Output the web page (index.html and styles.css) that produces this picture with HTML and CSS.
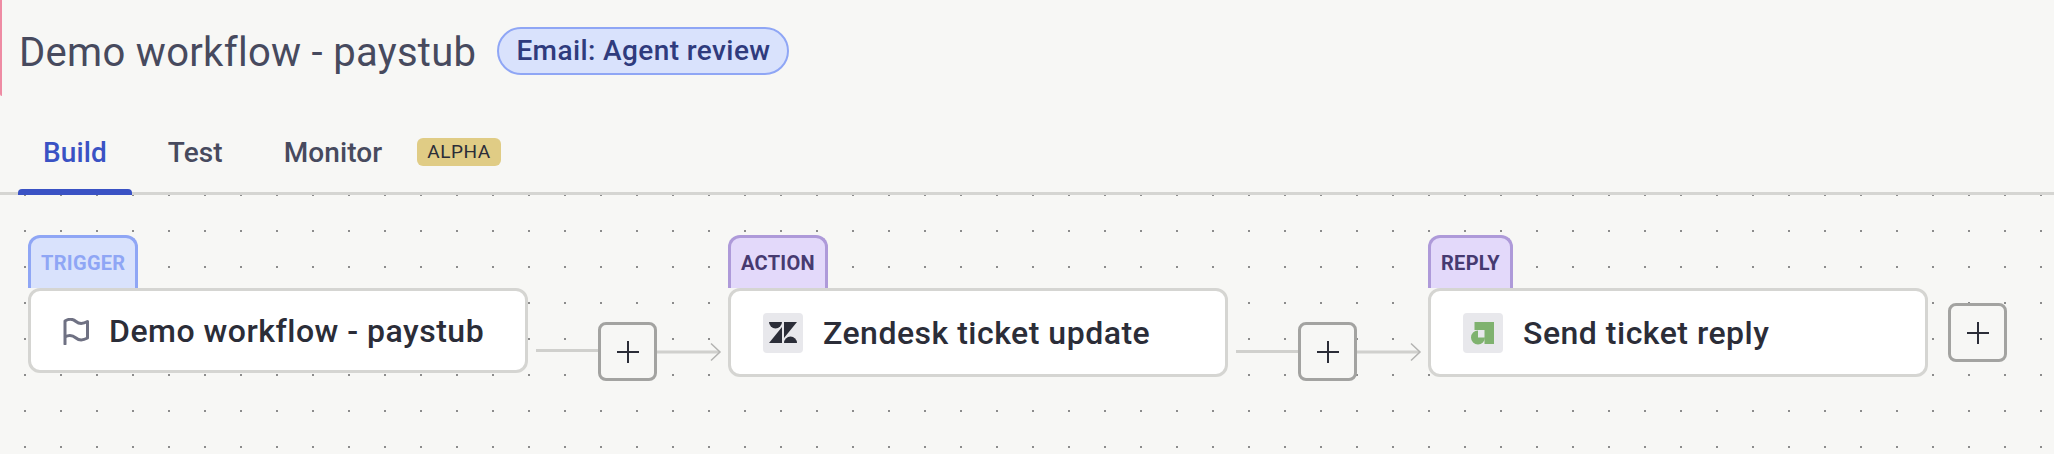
FILE: index.html
```html
<!DOCTYPE html>
<html lang="en">
<head>
    <meta charset="UTF-8">
    <meta name="viewport" content="width=device-width, initial-scale=1.0">
    <title>Demo workflow - paystub</title>
    <link rel="stylesheet" href="styles.css">
</head>
<body>
    <header class="title-row">
        <h1 class="title">Demo workflow - paystub</h1>
        <span class="status-pill">Email: Agent review</span>
    </header>

    <nav class="tabs">
        <a class="tab active">Build</a>
        <a class="tab">Test</a>
        <a class="tab">Monitor<span class="alpha-badge">ALPHA</span></a>
    </nav>

    <main class="canvas">
        <div class="node">
            <div class="node-tag trigger">TRIGGER</div>
            <div class="node-card">
                <svg class="flag-icon" viewBox="0 0 26 27" fill="none" stroke="#6f7183" stroke-width="3" stroke-linejoin="round" stroke-linecap="round">
                    <path d="M2 26V3C6 0.5 10 1 13 3.5S20 6 24.500 3.500V20C20 22.500 16 22.500 13 20S6 16.500 2 19"/>
                </svg>
                <span class="node-name">Demo workflow - paystub</span>
            </div>
        </div>

        <div class="connector">
            <div class="line raised"></div>
            <button class="add-btn">
                <svg viewBox="0 0 22 22" stroke="#2b2d38" stroke-width="2"><path d="M11 0V22M0 11H22"/></svg>
            </button>
            <svg class="arrow" viewBox="0 0 65 20" fill="none">
                <path d="M0 10H62" stroke="#d0d0cd" stroke-width="3"/>
                <path d="M54 1.500L63 10L54 18.500" stroke="#b3b3b1" stroke-width="1.500"/>
            </svg>
        </div>

        <div class="node">
            <div class="node-tag action">ACTION</div>
            <div class="node-card">
                <div class="app-tile">
                    <svg viewBox="0 0 40 40" fill="#2b2d38">
                        <g transform="translate(6 9)">
                            <path d="M13 0A6.500 6.500 0 0 1 0 0Z"/>
                            <path d="M13 5V21H0Z"/>
                            <path d="M15 16V0H28Z"/>
                            <path d="M15 21A6.500 6.500 0 0 1 28 21Z"/>
                        </g>
                    </svg>
                </div>
                <span class="node-name">Zendesk ticket update</span>
            </div>
        </div>

        <div class="connector">
            <div class="line"></div>
            <button class="add-btn">
                <svg viewBox="0 0 22 22" stroke="#2b2d38" stroke-width="2"><path d="M11 0V22M0 11H22"/></svg>
            </button>
            <svg class="arrow" viewBox="0 0 65 20" fill="none">
                <path d="M0 10H62" stroke="#d0d0cd" stroke-width="3"/>
                <path d="M54 1.500L63 10L54 18.500" stroke="#b3b3b1" stroke-width="1.500"/>
            </svg>
        </div>

        <div class="node">
            <div class="node-tag action">REPLY</div>
            <div class="node-card">
                <div class="app-tile">
                    <svg viewBox="0 0 40 40" fill="#7fb26f">
                        <path d="M11.500 9H31V31H21.500V17H11.500Z"/>
                        <path d="M15 24.500V17.500A7 7 0 1 0 22 24.500Z"/>
                    </svg>
                </div>
                <span class="node-name">Send ticket reply</span>
            </div>
        </div>

        <button class="add-btn end">
            <svg viewBox="0 0 22 22" stroke="#2b2d38" stroke-width="2"><path d="M11 0V22M0 11H22"/></svg>
        </button>
    </main>
</body>
</html>
```

FILE: styles.css
```css
* {
    margin: 0;
    padding: 0;
    box-sizing: border-box;
}

html, body {
    height: 100%;
}

body {
    background: #f7f7f5;
    color: #2b2d38;
    font-family: 'Roboto', 'Noto Sans', sans-serif;
    overflow: hidden;
    display: flex;
    flex-direction: column;
}

/* title */
.title-row {
    height: 96px;
    padding: 6px 0 0 17px;
    border-left: 2px solid #ee8ba3;
    border-bottom-left-radius: 2px;
    display: flex;
    align-items: center;
    gap: 21px;
}

.title {
    font-size: 40px;
    font-weight: 400;
    letter-spacing: 0.3px;
    color: #474a5e;
    line-height: 48px;
    padding-top: 3px;
}

.status-pill {
    height: 48px;
    padding: 0 17px;
    border: 2px solid #8fa6f5;
    border-radius: 24px;
    background: #d9e2fc;
    color: #2f3b7d;
    font-size: 28px;
    font-weight: 500;
    letter-spacing: 0.4px;
    line-height: 44px;
}

/* tabs */
.tabs {
    height: 99px;
    padding: 0 0 0 18px;
    border-bottom: 3px solid #d5d5d2;
    display: flex;
    gap: 11px;
}

.tab {
    position: relative;
    padding: 16px 25px 0;
    height: 96px;
    display: flex;
    align-items: center;
    font-size: 28px;
    font-weight: 500;
    letter-spacing: 0.1px;
    color: #474a5e;
}

.tab.active {
    color: #3a52c4;
}

.tab.active::after {
    content: '';
    position: absolute;
    left: 0;
    right: 0;
    bottom: -3px;
    height: 6px;
    background: #3a52c4;
    border-radius: 4px 4px 0 0;
}

.alpha-badge {
    margin-left: 35px;
    height: 28px;
    padding: 0 10px;
    border-radius: 6px;
    background: #e0cc85;
    color: #2b2d38;
    font-size: 19px;
    font-weight: 400;
    letter-spacing: 0.5px;
    line-height: 28px;
}

/* workflow canvas */
.canvas {
    flex: 1;
    padding: 40px 0 0 28px;
    display: flex;
    align-items: flex-start;
    background-image: radial-gradient(circle, #8c8c8c 1px, transparent 1.3px);
    background-size: 36px 36px;
    background-position: 7px -18px;
}

.node {
    width: 500px;
    flex-shrink: 0;
}

.node-tag {
    display: inline-block;
    height: 53px;
    padding: 7px 10px 0;
    border: 3px solid;
    border-bottom: 0;
    border-radius: 12px 12px 0 0;
    font-size: 20px;
    font-weight: 700;
    letter-spacing: 0.3px;
    line-height: 36px;
    vertical-align: bottom;
}

.node-tag.trigger {
    background: #d9e2fc;
    border-color: #8fa6f5;
    color: #8fa6f5;
}

.node-tag.action {
    background: #e3d9fa;
    border-color: #ae9ad9;
    color: #463a70;
}

.node-card {
    padding: 22px 32px 21px;
    background: #fff;
    border: 3px solid #d5d5d2;
    border-radius: 12px;
    display: flex;
    align-items: center;
    gap: 20px;
}

.flag-icon {
    width: 26px;
    height: 27px;
    margin-top: 1px;
    flex-shrink: 0;
}

.app-tile {
    width: 40px;
    height: 40px;
    background: #e8e8ec;
    border-radius: 4px;
}

.app-tile svg {
    display: block;
}

.node-name {
    font-size: 32px;
    font-weight: 500;
    letter-spacing: 0.5px;
    line-height: 36px;
    color: #2b2d38;
    white-space: nowrap;
}

.connector {
    width: 200px;
    flex-shrink: 0;
    height: 59px;
    margin-top: 87px;
    padding-left: 8px;
    display: flex;
    align-items: center;
}

.line {
    width: 62px;
    height: 3px;
    background: #d0d0cd;
}

.line.raised {
    margin-bottom: 3px;
}

.add-btn {
    width: 59px;
    height: 59px;
    flex-shrink: 0;
    background: #f7f7f5;
    border: 3px solid #a3a3a1;
    border-radius: 8px;
    display: flex;
    align-items: center;
    justify-content: center;
}

.add-btn svg {
    width: 22px;
    height: 22px;
}

.add-btn.end {
    margin: 68px 0 0 20px;
}

.arrow {
    width: 65px;
    height: 20px;
    flex-shrink: 0;
}
```
